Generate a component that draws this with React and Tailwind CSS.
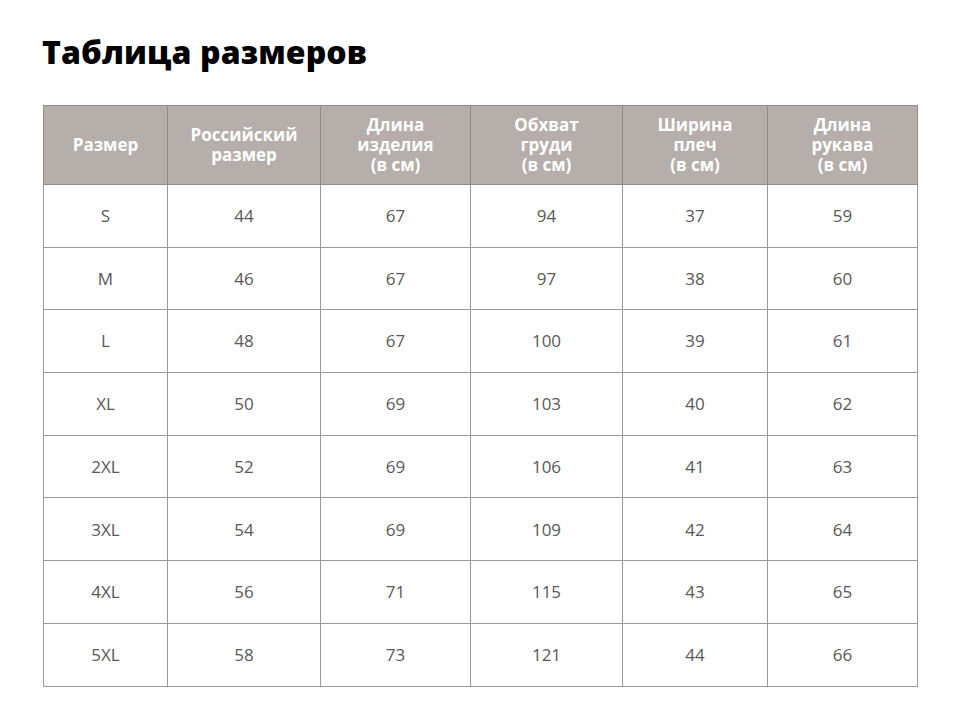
import React from 'react';

const columns = [
  { label: ['Размер'], width: 124 },
  { label: ['Российский', 'размер'], width: 153 },
  { label: ['Длина', 'изделия', '(в см)'], width: 150 },
  { label: ['Обхват', 'груди', '(в см)'], width: 152 },
  { label: ['Ширина', 'плеч', '(в см)'], width: 145 },
  { label: ['Длина', 'рукава', '(в см)'], width: 150 },
];

const rows = [
  ['S', '44', '67', '94', '37', '59'],
  ['M', '46', '67', '97', '38', '60'],
  ['L', '48', '67', '100', '39', '61'],
  ['XL', '50', '69', '103', '40', '62'],
  ['2XL', '52', '69', '106', '41', '63'],
  ['3XL', '54', '69', '109', '42', '64'],
  ['4XL', '56', '71', '115', '43', '65'],
  ['5XL', '58', '73', '121', '44', '66'],
];

export default function App() {
  return (
    <div className="min-h-screen bg-white px-[43px] pt-[29px]" style={{ fontFamily: '"Open Sans", sans-serif' }}>
      <h1 className="text-[32px] font-extrabold leading-[46px] text-black tracking-[0.1px] -ml-[1px]">Таблица размеров</h1>

      <table className="mt-[30px] border-collapse table-fixed w-[875px]">
        <colgroup>
          {columns.map((c, i) => (
            <col key={i} style={{ width: c.width }} />
          ))}
        </colgroup>
        <thead>
          <tr className="h-[79px] bg-[#b6aeaa]">
            {columns.map((c, i) => (
              <th key={i} className="border border-[#8f8c8a] text-white font-bold text-[17px] leading-[20px] text-center align-middle">
                {c.label.map((l, j) => (
                  <div key={j}>{l}</div>
                ))}
              </th>
            ))}
          </tr>
        </thead>
        <tbody>
          {rows.map((r, i) => (
            <tr key={i} className="h-[62.7px]">
              {r.map((v, j) => (
                <td key={j} className="border border-[#9a9a9a] text-center align-middle text-[17px] text-[#595959]">
                  {v}
                </td>
              ))}
            </tr>
          ))}
        </tbody>
      </table>
    </div>
  );
}
